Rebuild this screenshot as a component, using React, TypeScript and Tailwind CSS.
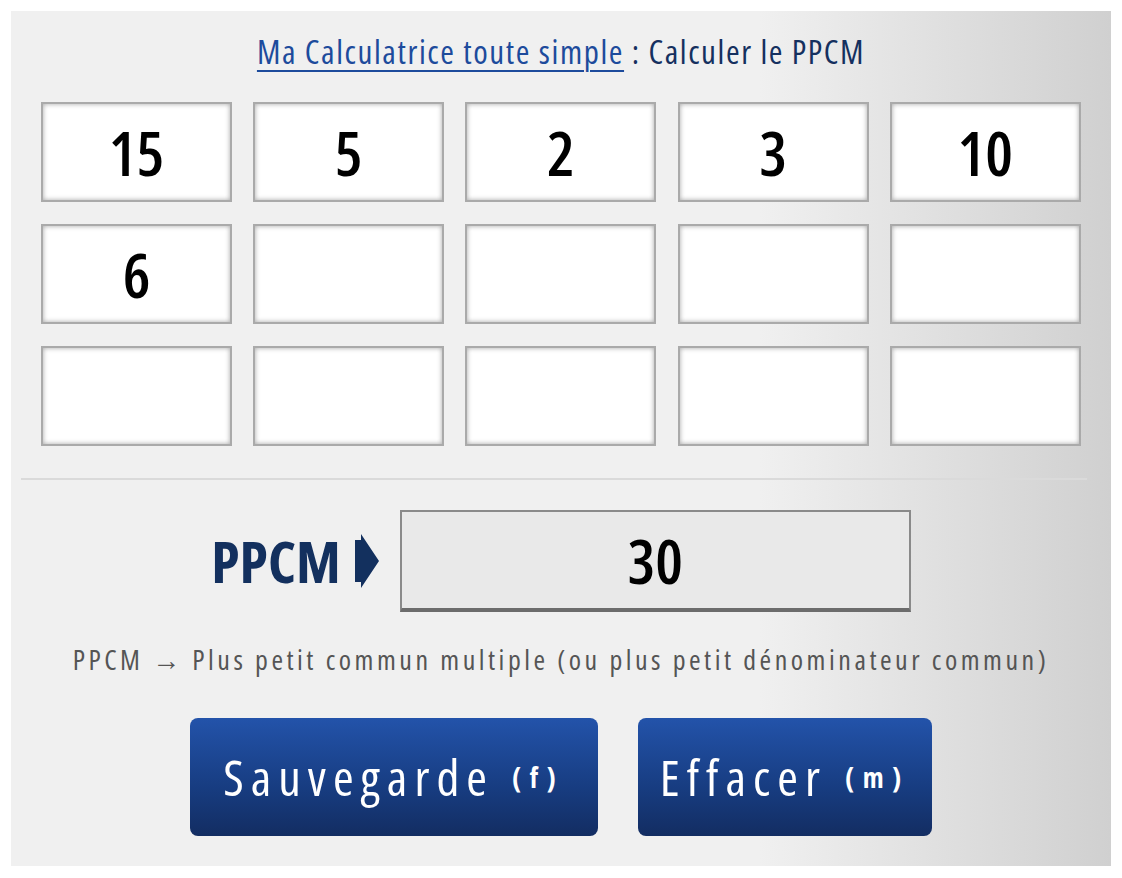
import React from "react"

const values = ["15", "5", "2", "3", "10", "6", "", "", "", "", "", "", "", "", ""]

function Arrow() {
  return (
    <svg width="25" height="54" viewBox="0 0 25 54" className="block shrink-0">
      <polygon points="0,6 6,6 6,0 24,27 6,54 6,48 0,48" fill="#13305e" />
    </svg>
  )
}

export default function App() {
  return (
    <div className="min-h-screen bg-white pt-[11px] font-['Open_Sans',sans-serif] font-stretch-condensed">
      <div className="mx-auto w-[1100px] h-[855px] bg-[linear-gradient(to_right,#f0f0f0_68%,#d0d0d0_100%)] pt-[21px]">
        {/* Title */}
        <h1 className="text-center text-[33px] leading-[40px] font-medium font-stretch-semi-condensed tracking-[1.6px] text-[#15305f]">
          <a href="#" className="text-[#1d4b9c] underline underline-offset-[6px] decoration-2">Ma Calculatrice toute simple</a>
          <span> : Calculer le PPCM</span>
        </h1>

        {/* Number boxes */}
        <div className="mt-[30px] px-[30px] grid grid-cols-5 gap-x-[21px] gap-y-[22px]">
          {values.map((v, i) => (
            <input
              key={i}
              readOnly
              value={v}
              className="h-[100px] w-[191px] bg-white border-2 border-[#aaaaaa] shadow-[inset_0_0_5px_rgba(0,0,0,0.35)] text-center text-[62px] font-semibold font-stretch-semi-condensed text-black outline-none"
            />
          ))}
        </div>

        <div className="mt-[32px] ml-[10px] mr-[24px] h-[2px] bg-[#dadada]" />

        {/* Result */}
        <div className="mt-[30px] flex items-center justify-center">
          <span className="text-[58px] font-bold leading-none text-[#13305e]">PPCM</span>
          <span className="ml-[14px] mr-[20px]"><Arrow /></span>
          <div className="w-[511px] h-[102px] bg-[#e9e9e9] border-2 border-[#8a8a8a] border-b-4 border-b-[#6c6c6c] flex items-center justify-center text-[62px] font-semibold font-stretch-semi-condensed text-black">
            30
          </div>
        </div>

        <p className="mt-[30px] text-center text-[28px] leading-[34px] font-stretch-semi-condensed tracking-[3.5px] text-[#555555]">
          PPCM → Plus petit commun multiple (ou plus petit dénominateur commun)
        </p>

        {/* Buttons */}
        <div className="mt-[42px] flex justify-center gap-[40px]">
          <button className="w-[408px] h-[118px] rounded-[8px] bg-[linear-gradient(to_bottom,#2353aa,#173c80_60%,#132d62)] text-white flex items-center justify-center gap-[18px]">
            <span className="text-[50px] tracking-[7px]">Sauvegarde</span>
            <span className="text-[28px] font-bold tracking-[9px]">(f)</span>
          </button>
          <button className="w-[294px] h-[118px] rounded-[8px] bg-[linear-gradient(to_bottom,#2353aa,#173c80_60%,#132d62)] text-white flex items-center justify-center gap-[18px]">
            <span className="text-[50px] tracking-[7px]">Effacer</span>
            <span className="text-[28px] font-bold tracking-[9px]">(m)</span>
          </button>
        </div>
      </div>
    </div>
  )
}
